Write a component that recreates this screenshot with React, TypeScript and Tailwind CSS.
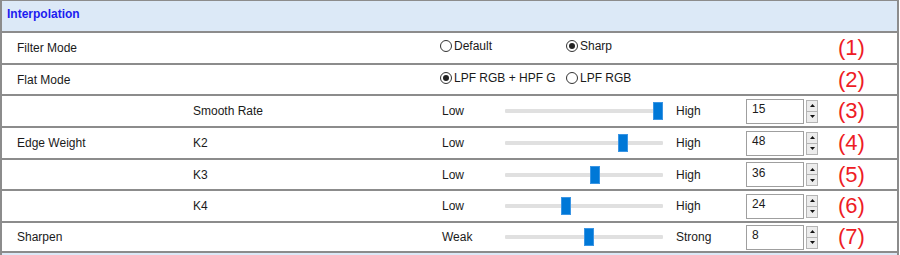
import React from "react";

const font = { fontFamily: '"Liberation Sans", Arial, sans-serif' };

function Radio({ checked, label }: { checked: boolean; label: string }) {
  return (
    <div className="flex items-center gap-[2px]">
      <span className="flex h-[12px] w-[12px] items-center justify-center rounded-full border border-[#333333] bg-white">
        {checked && <span className="h-[6px] w-[6px] rounded-full bg-[#222222]" />}
      </span>
      <span>{label}</span>
    </div>
  );
}

function Spin() {
  return (
    <div className="ml-[2px] flex h-[23px] w-[12px] flex-col border border-[#b4b4b4] bg-[#ececec]">
      <div className="flex flex-1 items-center justify-center border-b border-[#b4b4b4]">
        <svg width="5" height="3" viewBox="0 0 5 3">
          <path d="M2.5 0 L5 3 L0 3 Z" fill="#111" />
        </svg>
      </div>
      <div className="flex flex-1 items-center justify-center">
        <svg width="5" height="3" viewBox="0 0 5 3">
          <path d="M0 0 L5 0 L2.5 3 Z" fill="#111" />
        </svg>
      </div>
    </div>
  );
}

function RedNum({ n }: { n: number }) {
  return (
    <div className="ml-[20px] text-[22px] leading-none text-[#ee1c25]" style={{ fontFamily: '"Liberation Sans", Arial, sans-serif' }}>
      ({n})
    </div>
  );
}

function SliderControl({
  low,
  high,
  value,
  max,
}: {
  low: string;
  high: string;
  value: number;
  max: number;
}) {
  const left = (value / max) * 148;
  return (
    <div className="flex items-center">
      <div className="w-[65px] pl-[2px]">{low}</div>
      <div className="relative h-[18px] w-[158px]">
        <div className="absolute left-0 right-0 top-[7px] h-[4px] rounded-[1px] bg-[#e0e0e0]" />
        <div
          className="absolute top-0 h-[18px] w-[10px] border border-[#3a95e4] bg-[#0078d7]"
          style={{ left }}
        />
      </div>
      <div className="w-[83px] pl-[13px]">{high}</div>
      <div className="flex h-[25px] w-[58px] items-center border border-[#9f9f9f] bg-white pl-[5px] pb-[4px]">
        {value}
      </div>
      <Spin />
    </div>
  );
}

function Row({
  h,
  label,
  sub,
  children,
  n,
}: {
  h: string;
  label?: string;
  sub?: string;
  children: React.ReactNode;
  n: number;
}) {
  return (
    <div className={`flex items-center border-b-2 border-[#8c8c8c] ${h}`}>
      <div className="w-[191px] pl-[15px]">{label}</div>
      <div className="w-[247px]">{sub}</div>
      <div className="w-[378px]">{children}</div>
      <RedNum n={n} />
    </div>
  );
}

export default function App() {
  return (
    <div className="h-[255px] w-[900px] overflow-hidden bg-white text-[12px] text-[#1a1a1a]" style={font}>
      <div className="w-[899px] border-l-2 border-r-2 border-t border-[#8c8c8c]">
        <div className="h-[32px] border-b-2 border-[#8c8c8c] bg-[#dce9f7] pl-[5px] pt-[4px] font-bold text-[#1c1cf0]">
          Interpolation
        </div>
        <Row h="h-[32px]" label="Filter Mode" n={1}>
          <div className="flex pb-[4px]">
            <div className="w-[126px]">
              <Radio checked={false} label="Default" />
            </div>
            <Radio checked={true} label="Sharp" />
          </div>
        </Row>
        <Row h="h-[31px]" label="Flat Mode" n={2}>
          <div className="flex pb-[4px]">
            <div className="w-[126px]">
              <Radio checked={true} label="LPF RGB + HPF G" />
            </div>
            <Radio checked={false} label="LPF RGB" />
          </div>
        </Row>
        <Row h="h-[32px]" sub="Smooth Rate" n={3}>
          <SliderControl low="Low" high="High" value={15} max={15} />
        </Row>
        <Row h="h-[32px]" label="Edge Weight" sub="K2" n={4}>
          <SliderControl low="Low" high="High" value={48} max={63} />
        </Row>
        <Row h="h-[31px]" sub="K3" n={5}>
          <SliderControl low="Low" high="High" value={36} max={63} />
        </Row>
        <Row h="h-[32px]" sub="K4" n={6}>
          <SliderControl low="Low" high="High" value={24} max={63} />
        </Row>
        <Row h="h-[30px]" label="Sharpen" n={7}>
          <SliderControl low="Weak" high="Strong" value={8} max={15} />
        </Row>
        <div className="h-[10px] bg-[#dce9f7]" />
      </div>
    </div>
  );
}
